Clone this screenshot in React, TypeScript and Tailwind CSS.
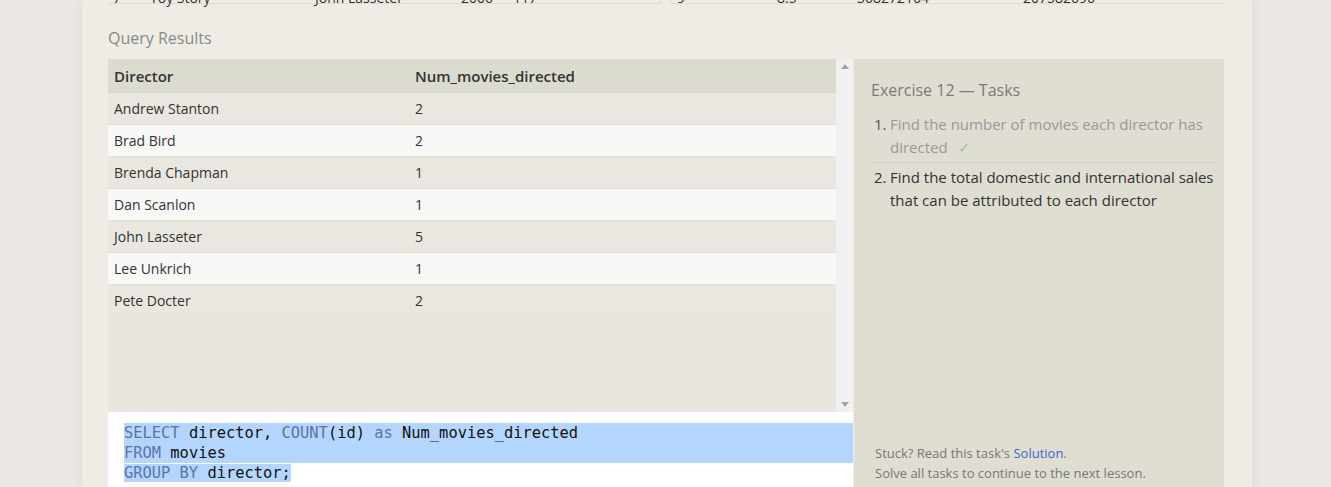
import React from 'react';

const results: Array<[string, number]> = [
  ['Andrew Stanton', 2],
  ['Brad Bird', 2],
  ['Brenda Chapman', 1],
  ['Dan Scanlon', 1],
  ['John Lasseter', 5],
  ['Lee Unkrich', 1],
  ['Pete Docter', 2],
];

const sans = { fontFamily: '"Open Sans", "Noto Sans", sans-serif' };
const mono = { fontFamily: '"DejaVu Sans Mono", "Liberation Mono", monospace' };

const Kw: React.FC<{ children: React.ReactNode }> = ({ children }) => (
  <span className="text-[#5b73ad]">{children}</span>
);

const App: React.FC = () => {
  return (
    <div className="w-[1331px] h-[487px] overflow-hidden bg-[#ebe7e4]" style={sans}>
      <div className="ml-[82px] w-[1170px] h-full flex flex-col bg-[#efece5] pl-[26px] pr-[28px] shadow-[0_0_14px_rgba(0,0,0,0.06)]">
        {/* Tables above, mostly scrolled off */}
        <div className="flex gap-[9px] -mt-[16px]">
          <div className="w-[553px] flex h-[20px] border-b border-r border-[#dedbd3] text-[14px] text-[#333] items-end leading-[11px]">
            <span className="w-[42px] pl-[5px]">7</span>
            <span className="w-[165px]">Toy Story</span>
            <span className="w-[146px]">John Lasseter</span>
            <span className="w-[52px]">2006</span>
            <span>117</span>
          </div>
          <div className="flex-1 flex h-[20px] border-b border-l border-[#dedbd3] text-[14px] text-[#333] items-end leading-[11px]">
            <span className="w-[106px] pl-[6px]">9</span>
            <span className="w-[80px]">8.5</span>
            <span className="w-[166px]">368272164</span>
            <span>207582696</span>
          </div>
        </div>

        <div className="mt-[22px] text-[16px] leading-[24px] text-[#888]">Query Results</div>

        <div className="mt-[9px] flex">
          {/* Left: results + editor */}
          <div className="w-[745px] flex flex-col">
            <div className="flex h-[353px] bg-[#e8e6de]">
              <div className="flex-1">
                <div className="flex h-[34px] items-center bg-[#dcdbd0] text-[15px] font-semibold text-[#333]">
                  <div className="w-[307px] pl-[6px]">Director</div>
                  <div>Num_movies_directed</div>
                </div>
                {results.map(([name, n], i) => (
                  <div
                    key={name}
                    className={`flex h-[32px] items-center text-[14px] text-[#333] border-b border-[#e2e0d8] ${
                      i % 2 === 0 ? 'bg-[#e9e7df]' : 'bg-[#f8f8f7]'
                    }`}
                  >
                    <div className="w-[307px] pl-[6px]">{name}</div>
                    <div>{n}</div>
                  </div>
                ))}
              </div>
              <div className="w-[17px] bg-[#f1f1f1] flex flex-col justify-between items-center py-[5px]">
                <svg width="8" height="5" viewBox="0 0 8 5">
                  <path d="M4 0 L8 5 L0 5 Z" fill="#a3a3a3" />
                </svg>
                <svg width="8" height="5" viewBox="0 0 8 5">
                  <path d="M0 0 L8 0 L4 5 Z" fill="#a3a3a3" />
                </svg>
              </div>
            </div>
            <div className="bg-white h-[100px] pt-[11px] pl-[16px] text-[15.4px] leading-[20px] text-[#111]" style={mono}>
              <div className="bg-[#b4d5fe] whitespace-pre">
                <Kw>SELECT</Kw> director, <Kw>COUNT</Kw>(id) <Kw>as</Kw> Num_movies_directed
              </div>
              <div className="bg-[#b4d5fe] whitespace-pre">
                <Kw>FROM</Kw> movies
              </div>
              <div className="whitespace-pre">
                <span className="bg-[#b4d5fe]">
                  <Kw>GROUP BY</Kw> director;
                </span>
              </div>
            </div>
          </div>

          {/* Right: tasks */}
          <div className="flex-1 ml-[1px] bg-[#e0ded3] h-[460px] pl-[17px] pr-[8px] pt-[19px] flex flex-col">
            <div className="text-[16px] leading-[24px] text-[#7a7a7a]">Exercise 12 — Tasks</div>
            <ol className="mt-[11px] text-[15px] leading-[23px]">
              <li className="flex pb-[3px] border-b border-[#d0cec4]">
                <span className="w-[19px] pl-[3px] text-[#555]">1.</span>
                <span className="flex-1 text-[#999]">
                  Find the number of movies each director has directed
                  <span className="ml-[10px] text-[#9fc59f]">✓</span>
                </span>
              </li>
              <li className="flex pt-[3px]">
                <span className="w-[19px] pl-[3px] text-[#333]">2.</span>
                <span className="flex-1 text-[#333]">
                  Find the total domestic and international sales that can be attributed to each director
                </span>
              </li>
            </ol>
            <div className="mt-[231px] pl-[4px] text-[13px] leading-[20px] text-[#777]">
              <div>
                Stuck? Read this task's <span className="text-[#3b68c4]">Solution</span>.
              </div>
              <div>Solve all tasks to continue to the next lesson.</div>
            </div>
          </div>
        </div>
      </div>
    </div>
  );
};

export default App;
